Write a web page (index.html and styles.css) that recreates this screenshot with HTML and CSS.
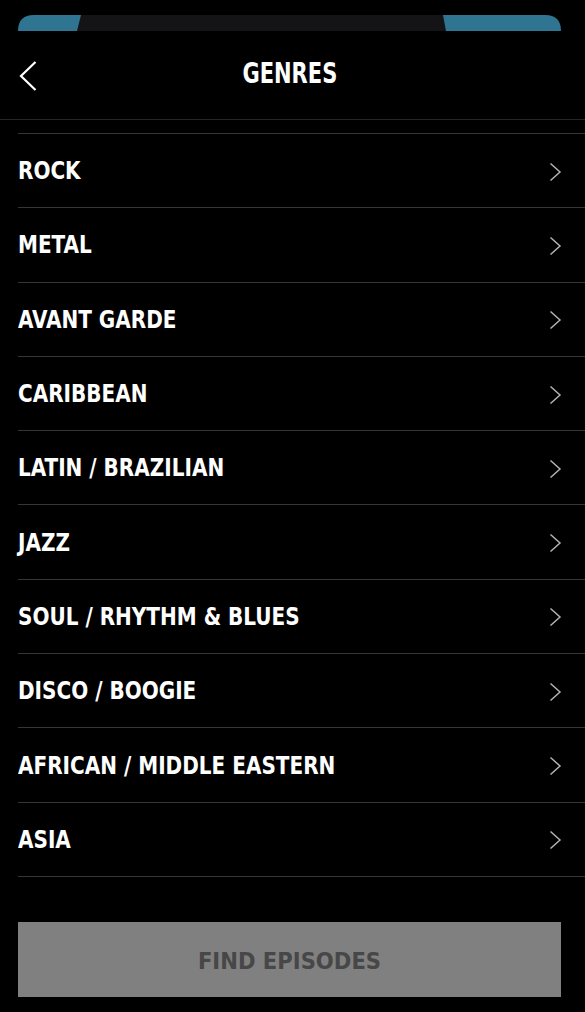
FILE: index.html
```html
<!DOCTYPE html>
<html>
<head>
<meta charset="utf-8">
<link rel="stylesheet" href="styles.css">
</head>
<body>
<div class="screen">
  <div class="peek">
    <svg width="543" height="16" viewBox="0 0 543 16">
      <defs><clipPath id="c"><path d="M0 16 V16 Q0 0 16 0 H527 Q543 0 543 16 Z"/></clipPath></defs>
      <g clip-path="url(#c)">
        <rect x="0" y="0" width="543" height="16" fill="#141417"/>
        <path d="M0 0 H63 L59 16 H0 Z" fill="#2f7592"/>
        <path d="M425 0 H543 V16 H428 Z" fill="#2f7592"/>
      </g>
    </svg>
  </div>
  <header class="topbar">
    <button class="back" aria-label="Back">
      <svg width="18" height="30" viewBox="0 0 18 30"><path d="M16.5 1 L2 15 L16.5 29" fill="none" stroke="#fff" stroke-width="2.2"/></svg>
    </button>
    <h1 class="title">GENRES</h1>
  </header>
  <ul class="list">
    <li class="row partial"></li>
    <li class="row"><span>ROCK</span><svg class="chev" width="13" height="20" viewBox="0 0 13 20"><path d="M1.5 1.5 L11 10 L1.5 18.5" fill="none" stroke="#b4b4b4" stroke-width="1.5"/></svg></li>
    <li class="row"><span>METAL</span><svg class="chev" width="13" height="20" viewBox="0 0 13 20"><path d="M1.5 1.5 L11 10 L1.5 18.5" fill="none" stroke="#b4b4b4" stroke-width="1.5"/></svg></li>
    <li class="row"><span>AVANT GARDE</span><svg class="chev" width="13" height="20" viewBox="0 0 13 20"><path d="M1.5 1.5 L11 10 L1.5 18.5" fill="none" stroke="#b4b4b4" stroke-width="1.5"/></svg></li>
    <li class="row"><span>CARIBBEAN</span><svg class="chev" width="13" height="20" viewBox="0 0 13 20"><path d="M1.5 1.5 L11 10 L1.5 18.5" fill="none" stroke="#b4b4b4" stroke-width="1.5"/></svg></li>
    <li class="row"><span>LATIN / BRAZILIAN</span><svg class="chev" width="13" height="20" viewBox="0 0 13 20"><path d="M1.5 1.5 L11 10 L1.5 18.5" fill="none" stroke="#b4b4b4" stroke-width="1.5"/></svg></li>
    <li class="row"><span>JAZZ</span><svg class="chev" width="13" height="20" viewBox="0 0 13 20"><path d="M1.5 1.5 L11 10 L1.5 18.5" fill="none" stroke="#b4b4b4" stroke-width="1.5"/></svg></li>
    <li class="row"><span>SOUL / RHYTHM &amp; BLUES</span><svg class="chev" width="13" height="20" viewBox="0 0 13 20"><path d="M1.5 1.5 L11 10 L1.5 18.5" fill="none" stroke="#b4b4b4" stroke-width="1.5"/></svg></li>
    <li class="row"><span>DISCO / BOOGIE</span><svg class="chev" width="13" height="20" viewBox="0 0 13 20"><path d="M1.5 1.5 L11 10 L1.5 18.5" fill="none" stroke="#b4b4b4" stroke-width="1.5"/></svg></li>
    <li class="row"><span>AFRICAN / MIDDLE EASTERN</span><svg class="chev" width="13" height="20" viewBox="0 0 13 20"><path d="M1.5 1.5 L11 10 L1.5 18.5" fill="none" stroke="#b4b4b4" stroke-width="1.5"/></svg></li>
    <li class="row"><span>ASIA</span><svg class="chev" width="13" height="20" viewBox="0 0 13 20"><path d="M1.5 1.5 L11 10 L1.5 18.5" fill="none" stroke="#b4b4b4" stroke-width="1.5"/></svg></li>
  </ul>
  <div class="footer">
    <button class="find"><span>FIND EPISODES</span></button>
  </div>
</div>
</body>
</html>
```
FILE: styles.css
```css
* { box-sizing: border-box; }
html, body { margin: 0; padding: 0; background: #000; }
body {
  font-family: "DejaVu Sans Condensed", "DejaVu Sans", "Liberation Sans", sans-serif;
  color: #fff;
  width: 585px;
  height: 1012px;
  overflow: hidden;
}
.screen { display: flex; flex-direction: column; }
.peek { padding: 15px 18px 0; height: 31px; display: flex; }
.peek svg { display: block; }
.topbar {
  height: 89px;
  display: flex;
  align-items: center;
  justify-content: center;
  border-bottom: 1px solid #262626;
  position: relative;
}
.back {
  position: absolute;
  left: 19px;
  top: 30px;
  background: none;
  border: 0;
  padding: 0;
  display: flex;
}
.title {
  margin: 0;
  font-size: 27.5px;
  font-weight: bold;
  transform: translate(-3px, -2px) scaleX(0.85);
}
.list { list-style: none; margin: 0; padding: 0 0 0 18px; }
.row {
  height: 74.3px;
  border-bottom: 1px solid #363636;
  display: flex;
  align-items: center;
  justify-content: space-between;
  padding-right: 23px;
  font-size: 25px;
  font-weight: bold;
}
.row span {
  display: block;
  white-space: nowrap;
  transform-origin: left center;
  transform: scaleX(0.89);
}
.row.partial { height: 14px; }
.chev { display: block; margin-top: 2px; }
.footer { padding: 45px 24px 0 18px; }
.find {
  width: 543px;
  height: 75px;
  background: #808080;
  border: 0;
  color: #474747;
  font-family: inherit;
  font-size: 23.5px;
  font-weight: bold;
  display: flex;
  align-items: center;
  justify-content: center;
  padding: 3px 0 0;
}
```
